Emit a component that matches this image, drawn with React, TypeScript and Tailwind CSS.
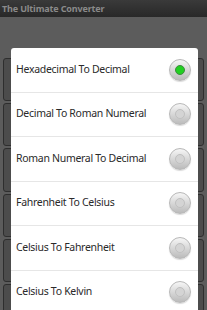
import React from "react";

const OPTIONS = [
  "Hexadecimal To Decimal",
  "Decimal To Roman Numeral",
  "Roman Numeral To Decimal",
  "Fahrenheit To Celsius",
  "Celsius To Fahrenheit",
  "Celsius To Kelvin",
];

function Radio({ checked }: { checked: boolean }) {
  return (
    <div className="w-[22px] h-[22px] rounded-full bg-gradient-to-b from-[#f6f6f6] to-[#bbbbbb] border border-[#b8b8b8] flex items-center justify-center shadow-[0_1px_1px_rgba(0,0,0,0.15)]">
      {checked ? (
        <div className="w-[10px] h-[10px] rounded-full bg-[#22d022] border border-[#3f8a3f]" />
      ) : (
        <div className="w-[10px] h-[10px] rounded-full bg-[#d4d4d4] border border-[#c0c0c0]" />
      )}
    </div>
  );
}

export default function App() {
  return (
    <div
      className="relative w-[207px] h-[310px] overflow-hidden bg-[#3a3a3a]"
      style={{ fontFamily: '"Noto Sans", "Open Sans", sans-serif' }}
    >
      {/* title bar */}
      <div className="h-[17px] bg-gradient-to-b from-[#3a3a3a] to-[#282828] flex items-center px-[2px]">
        <span className="text-[9px] font-bold text-[#8a8a8a] leading-none tracking-[-0.15px]">
          The Ultimate Converter
        </span>
      </div>

      {/* dimmed content behind the dialog */}
      <div className="flex flex-col gap-[2px] pl-[3px] pr-[3px] pt-[41px] bg-[#5c5c5c] h-full">
        {[0, 1, 2, 3, 4, 5].map((i) => (
          <div key={i} className="h-[47px] rounded-[3px] bg-[#4c4c4c] border border-[#2e2e2e]" />
        ))}
      </div>

      {/* dialog */}
      <div className="absolute left-[11px] right-[9px] top-[48px] bottom-0 bg-white rounded-t-[3px]">
        {OPTIONS.map((label, i) => (
          <div
            key={label}
            className="h-[44.5px] flex items-center justify-between pl-[5px] pr-[7px] border-b border-[#e6e6e6]"
          >
            <span className="text-[10.5px] text-[#2a2a2a] tracking-[-0.3px]">{label}</span>
            <Radio checked={i === 0} />
          </div>
        ))}
      </div>
    </div>
  );
}
